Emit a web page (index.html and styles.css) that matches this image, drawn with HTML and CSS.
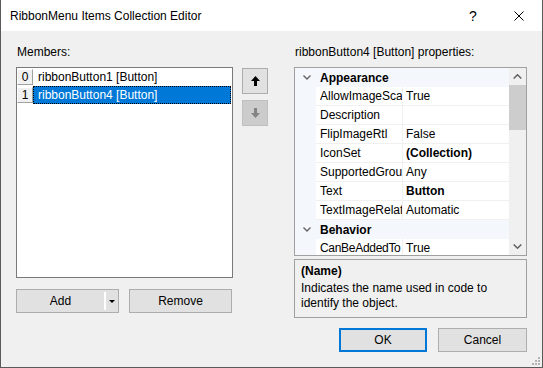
FILE: index.html
```html
<!DOCTYPE html>
<html lang="en">
<head>
    <meta charset="UTF-8">
    <title>RibbonMenu Items Collection Editor</title>
    <link rel="stylesheet" href="styles.css">
</head>
<body>
    <div class="window">
        <!-- Title bar -->
        <div class="titlebar">
            <span class="title">RibbonMenu Items Collection Editor</span>
            <span class="caption-btn help">?</span>
            <span class="caption-btn">
                <svg width="10" height="10" viewBox="0 0 10 10"><path d="M0.5 0.5 L9.5 9.5 M9.5 0.5 L0.5 9.5" stroke="#000" stroke-width="1"/></svg>
            </span>
        </div>

        <div class="content">
            <!-- Members -->
            <div class="left">
                <div class="label">Members:</div>
                <div class="list-row">
                    <div class="listbox">
                        <div class="item"><span class="idx">0</span><span class="name">ribbonButton1 [Button]</span></div>
                        <div class="item selected"><span class="idx">1</span><span class="name">ribbonButton4 [Button]</span></div>
                    </div>
                    <div class="order-buttons">
                        <button class="order">
                            <svg width="9" height="10" viewBox="0 0 9 10"><path d="M4.5 0 L9 5 H6 V10 H3 V5 H0 Z" fill="#000"/></svg>
                        </button>
                        <button class="order down" disabled>
                            <svg width="9" height="10" viewBox="0 0 9 10"><path d="M4.5 10 L9 5 H6 V0 H3 V5 H0 Z" fill="#838383"/></svg>
                        </button>
                    </div>
                </div>
                <div class="member-buttons">
                    <button class="btn add">
                        <span class="add-label">Add</span>
                        <span class="split"></span>
                        <span class="caret"><svg width="6" height="3" viewBox="0 0 6 3"><path d="M0 0 H6 L3 3 Z" fill="#000"/></svg></span>
                    </button>
                    <button class="btn">Remove</button>
                </div>
            </div>

            <!-- Properties -->
            <div class="right">
                <div class="label">ribbonButton4 [Button] properties:</div>
                <div class="propgrid">
                    <div class="rows">
                        <div class="cat">
                            <span class="chev"><svg width="8" height="5" viewBox="0 0 8 5"><path d="M0.5 0.5 L4 4 L7.5 0.5" fill="none" stroke="#606060" stroke-width="1.3"/></svg></span>
                            <span>Appearance</span>
                        </div>
                        <div class="row"><span class="margin"></span><span class="pname">AllowImageSca</span><span class="pval">True</span></div>
                        <div class="row"><span class="margin"></span><span class="pname">Description</span><span class="pval"></span></div>
                        <div class="row"><span class="margin"></span><span class="pname">FlipImageRtl</span><span class="pval">False</span></div>
                        <div class="row"><span class="margin"></span><span class="pname">IconSet</span><span class="pval bold">(Collection)</span></div>
                        <div class="row"><span class="margin"></span><span class="pname">SupportedGrou</span><span class="pval">Any</span></div>
                        <div class="row"><span class="margin"></span><span class="pname">Text</span><span class="pval bold">Button</span></div>
                        <div class="row"><span class="margin"></span><span class="pname">TextImageRelat</span><span class="pval">Automatic</span></div>
                        <div class="cat">
                            <span class="chev"><svg width="8" height="5" viewBox="0 0 8 5"><path d="M0.5 0.5 L4 4 L7.5 0.5" fill="none" stroke="#606060" stroke-width="1.3"/></svg></span>
                            <span>Behavior</span>
                        </div>
                        <div class="row"><span class="margin"></span><span class="pname tight">CanBeAddedTo</span><span class="pval">True</span></div>
                    </div>
                    <div class="scrollbar">
                        <span class="sb-btn"><svg width="9" height="5" viewBox="0 0 9 5"><path d="M0.7 4.5 L4.5 0.8 L8.3 4.5" fill="none" stroke="#606060" stroke-width="1.5"/></svg></span>
                        <div class="track"><div class="thumb"></div></div>
                        <span class="sb-btn"><svg width="9" height="5" viewBox="0 0 9 5"><path d="M0.7 0.5 L4.5 4.2 L8.3 0.5" fill="none" stroke="#606060" stroke-width="1.5"/></svg></span>
                    </div>
                </div>
                <div class="desc">
                    <div class="desc-title">(Name)</div>
                    <div>Indicates the name used in code to identify the object.</div>
                </div>
                <div class="dialog-buttons">
                    <button class="btn ok">OK</button>
                    <button class="btn cancel">Cancel</button>
                </div>
            </div>
        </div>

        <svg class="grip" width="8" height="8" viewBox="0 0 8 8">
            <rect x="6" y="0" width="2" height="2" fill="#b4b4b4"/>
            <rect x="3" y="3" width="2" height="2" fill="#b4b4b4"/>
            <rect x="6" y="3" width="2" height="2" fill="#b4b4b4"/>
            <rect x="0" y="6" width="2" height="2" fill="#b4b4b4"/>
            <rect x="3" y="6" width="2" height="2" fill="#b4b4b4"/>
            <rect x="6" y="6" width="2" height="2" fill="#b4b4b4"/>
        </svg>
    </div>
</body>
</html>
```

FILE: styles.css
```css
* { box-sizing: border-box; }
body {
    margin: 0;
    font-family: "Liberation Sans", Arial, sans-serif;
    font-size: 12px;
    color: #000;
    background: #fff;
}
.window {
    position: relative;
    width: 543px;
    height: 368px;
    border: 1px solid #5a5a5a;
    border-top: 0;
    background: #f0f0f0;
    display: flex;
    flex-direction: column;
}
.titlebar {
    height: 31px;
    flex: none;
    background: #fff;
    display: flex;
    align-items: center;
    padding-left: 9px;
}
.title { flex: 1; }
.caption-btn {
    width: 46px;
    height: 31px;
    display: flex;
    align-items: center;
    justify-content: center;
}
.caption-btn.help { font-size: 14px; }
.content {
    flex: 1;
    display: flex;
    gap: 26px;
    padding: 13px 15px 0;
}
.left { width: 252px; }
.right { width: 233px; }
.label {
    height: 16px;
    line-height: 16px;
    margin-bottom: 7px;
    padding-left: 1px;
}

/* members list */
.list-row { display: flex; gap: 9px; }
.listbox {
    width: 217px;
    height: 211px;
    background: #fff;
    border: 1px solid #7a7a7a;
}
.item { display: flex; height: 18px; }
.idx {
    width: 16px;
    margin: 1px 0;
    background: #f0f0f0;
    border: 1px solid;
    border-color: #fff #a0a0a0 #a0a0a0 #fff;
    text-align: center;
    line-height: 14px;
}
.item .name {
    flex: 1;
    padding-left: 4px;
    line-height: 16px;
    border: 1px solid transparent;
    margin-right: 1px;
}
.item.selected .name {
    background: #0078d7;
    color: #fff;
    border: 1px dotted #000;
}
.order-buttons {
    display: flex;
    flex-direction: column;
    gap: 6px;
    padding-top: 1px;
}
.order {
    width: 26px;
    height: 26px;
    padding: 0;
    background: #e1e1e1;
    border: 1px solid #adadad;
    display: flex;
    align-items: center;
    justify-content: center;
}
.order.down { background: #cccccc; border-color: #bfbfbf; }

/* buttons */
.btn {
    height: 24px;
    padding: 0;
    background: #e1e1e1;
    border: 1px solid #adadad;
    font: inherit;
    color: #000;
}
.member-buttons { display: flex; gap: 10px; margin-top: 11px; }
.member-buttons .btn { width: 103px; }
.btn.add { display: flex; align-items: center; }
.add-label { flex: 1; text-align: center; }
.split { width: 2px; height: 18px; background: #fff; }
.caret { width: 12px; display: flex; justify-content: center; }

/* property grid */
.propgrid {
    height: 189px;
    border: 1px solid #a0a0a0;
    background: #fff;
    display: flex;
}
.rows { flex: 1; overflow: hidden; }
.cat {
    display: flex;
    align-items: center;
    height: 19px;
    background: #f4f7fc;
    font-weight: bold;
}
.chev {
    width: 21px;
    display: flex;
    justify-content: center;
    padding-left: 2px;
}
.cat span + span { padding-left: 4px; }
.row {
    display: grid;
    grid-template-columns: 21px 87px 1fr;
    height: 19px;
}
.margin { background: #f4f7fc; }
.pname, .pval {
    line-height: 19px;
    border-bottom: 1px solid #f0f0f0;
    white-space: nowrap;
    overflow: hidden;
}
.pname { padding-left: 4px; border-right: 1px solid #f0f0f0; }
.pname.tight { letter-spacing: -0.3px; }
.pval { padding-left: 3px; }
.bold { font-weight: bold; }
.scrollbar {
    width: 17px;
    background: #f0f0f0;
    display: flex;
    flex-direction: column;
}
.sb-btn {
    height: 17px;
    display: flex;
    align-items: center;
    justify-content: center;
}
.track { flex: 1; }
.thumb { height: 45px; background: #cdcdcd; }

.desc {
    height: 59px;
    margin-top: 3px;
    border: 1px solid #a0a0a0;
    padding: 4px 6px;
    line-height: 15px;
}
.desc-title { font-weight: bold; margin-bottom: 2px; }

.dialog-buttons {
    display: flex;
    justify-content: flex-end;
    gap: 11px;
    margin-top: 10px;
}
.btn.ok { width: 88px; border: 2px solid #0078d7; }
.btn.cancel { width: 89px; }

.grip { position: absolute; right: 2px; bottom: 2px; }
```
